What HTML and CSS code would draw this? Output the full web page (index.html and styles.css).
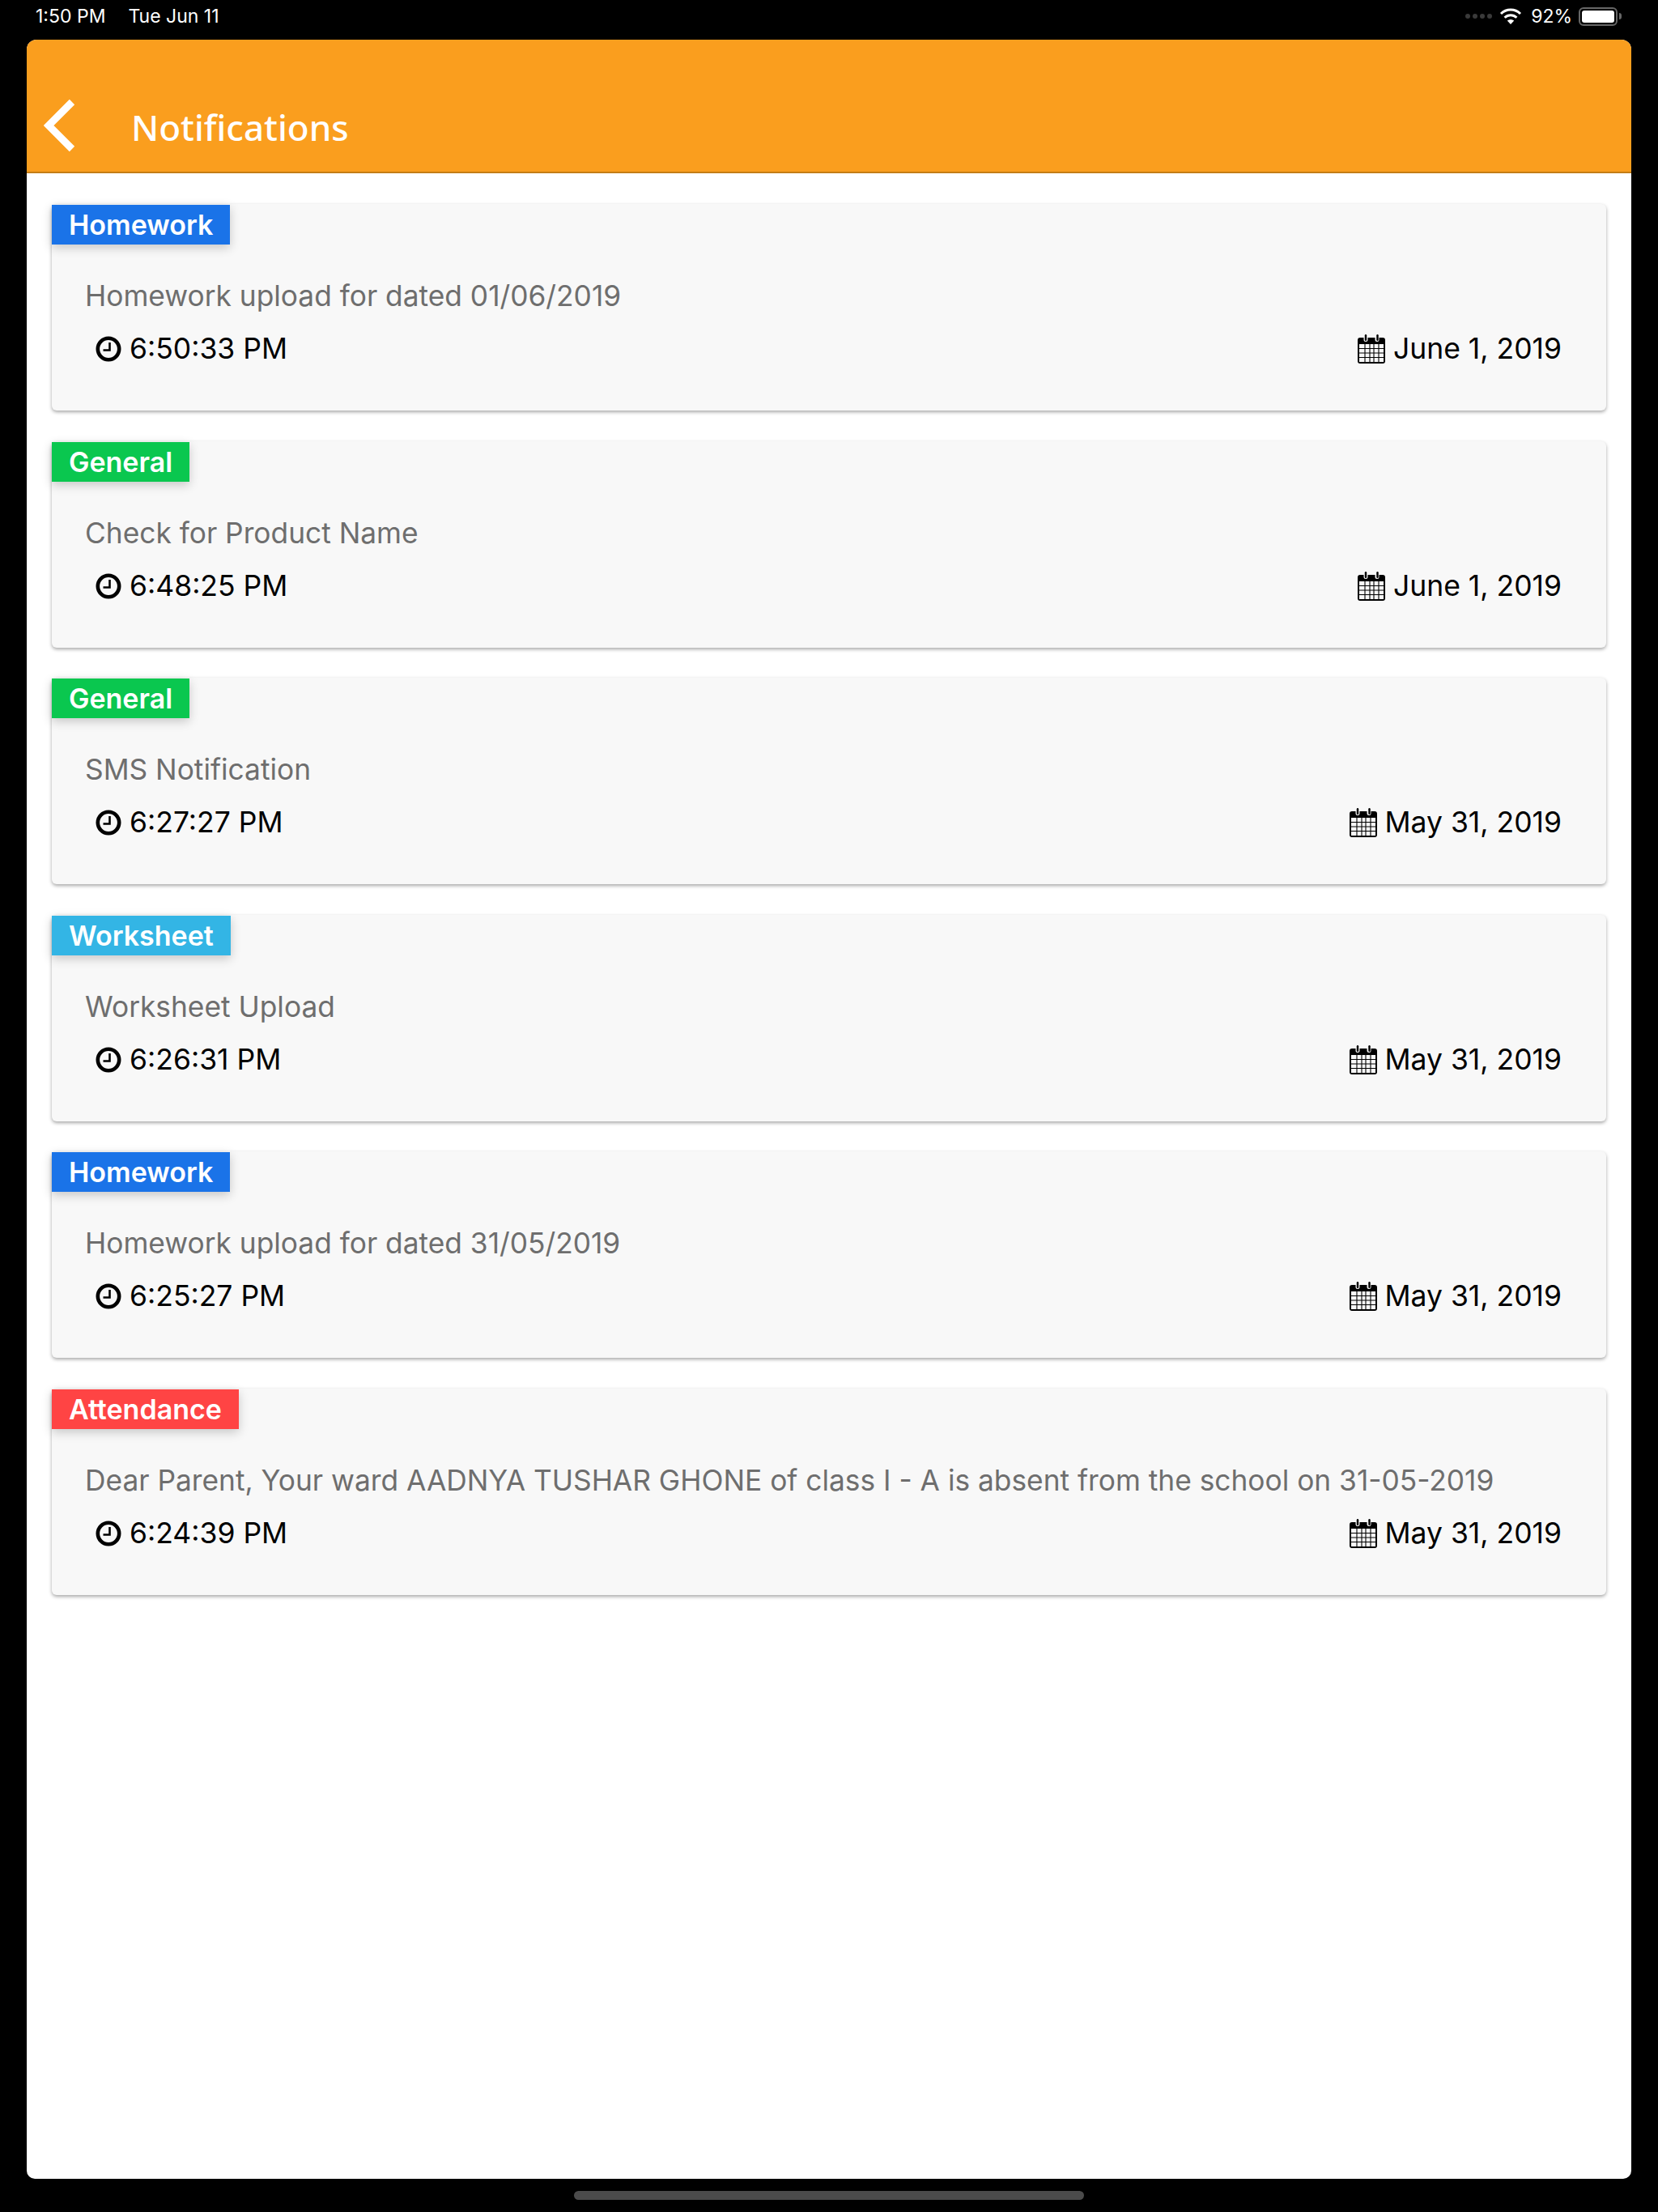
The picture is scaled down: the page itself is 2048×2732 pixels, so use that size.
FILE: index.html
```html
<!DOCTYPE html>
<html lang="en">
<head>
    <meta charset="UTF-8">
    <title>Notifications</title>
    <link rel="stylesheet" href="styles.css">
</head>
<body>
    <svg class="defs" width="0" height="0">
        <symbol id="clock" viewBox="0 0 32 32">
            <circle cx="16" cy="16" r="13.2" fill="none" stroke="currentColor" stroke-width="4.6"/>
            <path d="M17.5 8v9.5H9.5" fill="none" stroke="currentColor" stroke-width="2.6"/>
        </symbol>
        <symbol id="calendar" viewBox="0 0 34 36">
            <path fill-rule="evenodd" fill="currentColor" d="M3 4h4.500v2.500a2.500 2.500 0 0 0 5 0V4h9v2.500a2.500 2.500 0 0 0 5 0V4H31a3 3 0 0 1 3 3v26a3 3 0 0 1-3 3H3a3 3 0 0 1-3-3V7a3 3 0 0 1 3-3zM2 12v22h30V12z"/>
            <path fill="none" stroke="currentColor" stroke-width="1.100" d="M9 12v22M15 12v22M20 12v22M26 12v22M2 17.500h30M2 23h30M2 28.500h30"/>
            <rect x="8.800" y="0" width="2.400" height="8" rx="1.200" fill="currentColor"/>
            <rect x="23.300" y="0" width="2.400" height="8" rx="1.200" fill="currentColor"/>
        </symbol>
    </svg>

    <div class="status-bar">
        <div class="status-left">
            <span>1:50 PM</span>
            <span>Tue Jun 11</span>
        </div>
        <div class="status-right">
            <div class="signal"><i></i><i></i><i></i><i></i></div>
            <svg class="wifi" viewBox="0 0 28 20">
                <path fill="#fff" d="M14 20l-4.200-4.400a6 6 0 0 1 8.400 0z"/>
                <path fill="none" stroke="#fff" stroke-width="3" d="M6.600 11.800a10.500 10.500 0 0 1 14.800 0"/>
                <path fill="none" stroke="#fff" stroke-width="3" d="M2 7a17 17 0 0 1 24 0"/>
            </svg>
            <span>92%</span>
            <div class="battery"><div class="battery-fill"></div></div>
            <div class="battery-tip"></div>
        </div>
    </div>

    <div class="app">
        <header class="header">
            <svg class="back" viewBox="0 0 40 66">
                <path d="M35 4L6 33l29 29" fill="none" stroke="#fff" stroke-width="9"/>
            </svg>
            <h1>Notifications</h1>
        </header>

        <div class="list">
            <div class="card">
                <div class="tag blue">Homework</div>
                <p class="message">Homework upload for dated 01/06/2019</p>
                <div class="meta">
                    <div class="time"><svg class="icon-clock"><use href="#clock"/></svg>6:50:33 PM</div>
                    <div class="date"><svg class="icon-cal"><use href="#calendar"/></svg>June 1, 2019</div>
                </div>
            </div>
            <div class="card">
                <div class="tag green">General</div>
                <p class="message">Check for Product Name</p>
                <div class="meta">
                    <div class="time"><svg class="icon-clock"><use href="#clock"/></svg>6:48:25 PM</div>
                    <div class="date"><svg class="icon-cal"><use href="#calendar"/></svg>June 1, 2019</div>
                </div>
            </div>
            <div class="card">
                <div class="tag green">General</div>
                <p class="message">SMS Notification</p>
                <div class="meta">
                    <div class="time"><svg class="icon-clock"><use href="#clock"/></svg>6:27:27 PM</div>
                    <div class="date"><svg class="icon-cal"><use href="#calendar"/></svg>May 31, 2019</div>
                </div>
            </div>
            <div class="card">
                <div class="tag sky">Worksheet</div>
                <p class="message">Worksheet Upload</p>
                <div class="meta">
                    <div class="time"><svg class="icon-clock"><use href="#clock"/></svg>6:26:31 PM</div>
                    <div class="date"><svg class="icon-cal"><use href="#calendar"/></svg>May 31, 2019</div>
                </div>
            </div>
            <div class="card">
                <div class="tag blue">Homework</div>
                <p class="message">Homework upload for dated 31/05/2019</p>
                <div class="meta">
                    <div class="time"><svg class="icon-clock"><use href="#clock"/></svg>6:25:27 PM</div>
                    <div class="date"><svg class="icon-cal"><use href="#calendar"/></svg>May 31, 2019</div>
                </div>
            </div>
            <div class="card">
                <div class="tag red">Attendance</div>
                <p class="message">Dear Parent, Your ward AADNYA TUSHAR GHONE of class I - A is absent from the school on 31-05-2019</p>
                <div class="meta">
                    <div class="time"><svg class="icon-clock"><use href="#clock"/></svg>6:24:39 PM</div>
                    <div class="date"><svg class="icon-cal"><use href="#calendar"/></svg>May 31, 2019</div>
                </div>
            </div>
        </div>
    </div>

    <div class="home-area">
        <div class="home-bar"></div>
    </div>
</body>
</html>
```

FILE: styles.css
```css
html, body {
    margin: 0;
    height: 2732px;
}
body {
    background: #000;
    font-family: Inter, "Liberation Sans", sans-serif;
    display: flex;
    flex-direction: column;
    overflow: hidden;
}
.defs {
    position: absolute;
}

/* status bar */
.status-bar {
    height: 49px;
    display: flex;
    justify-content: space-between;
    padding: 0 45px 0 44px;
    color: #fff;
    font-size: 23px;
    line-height: 40px;
}
.status-left {
    display: flex;
    gap: 28px;
}
.status-right {
    display: flex;
    align-items: center;
    height: 40px;
}
.signal {
    display: flex;
    gap: 3px;
    margin-right: 9px;
}
.signal i {
    width: 6px;
    height: 6px;
    border-radius: 50%;
    background: #3a3a3a;
}
.wifi {
    width: 28px;
    height: 20px;
    margin-right: 11px;
}
.battery {
    width: 48px;
    height: 23px;
    box-sizing: border-box;
    border: 2px solid #666;
    border-radius: 6px;
    padding: 2px;
    margin-left: 8px;
}
.battery-fill {
    height: 100%;
    background: #fff;
    border-radius: 3px;
}
.battery-tip {
    width: 3px;
    height: 8px;
    margin-left: 2px;
    background: #666;
    border-radius: 0 3px 3px 0;
}

/* app window */
.app {
    height: 2642px;
    margin: 0 33px;
    background: #fff;
    border-radius: 12px 12px 10px 10px;
    overflow: hidden;
}
.header {
    height: 165px;
    box-sizing: border-box;
    background: #fa9e1e;
    border-bottom: 2px solid #c47d16;
    display: flex;
    align-items: flex-end;
    padding: 0 0 22px 21px;
}
.back {
    width: 40px;
    height: 66px;
    margin-bottom: 2px;
}
.header h1 {
    margin: 0 0 0 68px;
    color: #fff;
    font-family: "Noto Sans", sans-serif;
    font-size: 44px;
    font-weight: 500;
    line-height: 66px;
}

/* cards */
.list {
    padding: 38px 31px 0;
    display: flex;
    flex-direction: column;
    gap: 37.500px;
}
.card {
    height: 255px;
    box-sizing: border-box;
    background: #f8f8f8;
    border-radius: 6px;
    box-shadow: 0 2px 4px rgba(0, 0, 0, 0.35);
    display: flex;
    flex-direction: column;
    align-items: flex-start;
    padding-top: 1px;
}
.tag {
    height: 49px;
    line-height: 49px;
    padding: 0 21px;
    color: #fff;
    font-size: 34px;
    font-weight: 600;
    box-shadow: 0 4px 12px rgba(0, 0, 0, 0.2);
}
.blue { background: #1a73e8; }
.green { background: #0ac74f; }
.sky { background: #33b5e5; }
.red { background: #ff4444; }
.message {
    margin: 41px 0 0 41px;
    color: #6e6e6e;
    font-size: 35.300px;
    line-height: 46px;
}
.meta {
    align-self: stretch;
    display: flex;
    justify-content: space-between;
    margin-top: 19px;
    padding: 0 55px 0 54px;
    color: #000;
    font-size: 35.500px;
    line-height: 46px;
}
.time, .date {
    display: flex;
    align-items: center;
}
.icon-clock {
    width: 32px;
    height: 32px;
    margin-right: 10px;
}
.icon-cal {
    width: 34px;
    height: 36px;
    margin-right: 10px;
}

/* home indicator */
.home-area {
    flex: 1;
    display: flex;
    justify-content: center;
    padding-top: 15px;
}
.home-bar {
    width: 630px;
    height: 11px;
    border-radius: 6px;
    background: #4b4b4b;
}
```
